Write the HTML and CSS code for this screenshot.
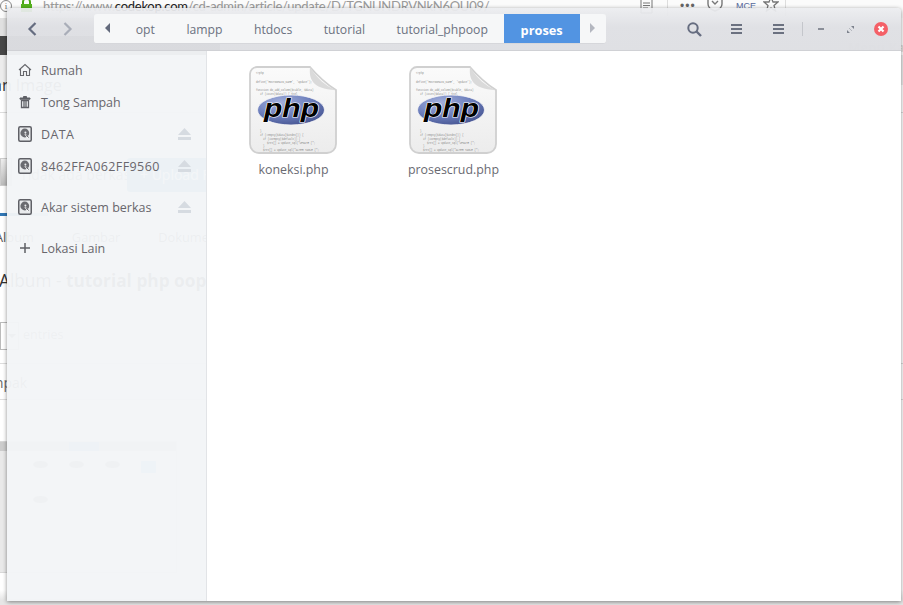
FILE: index.html
```html
<!DOCTYPE html>
<html lang="id">
<head>
<meta charset="utf-8">
<title>proses</title>
<link rel="stylesheet" href="styles.css">
</head>
<body>
<svg class="defs" width="0" height="0" aria-hidden="true">
  <defs>
    <linearGradient id="paper" x1="0" y1="0" x2="0" y2="1">
      <stop offset="0" stop-color="#fbfbfb"/><stop offset="1" stop-color="#ececec"/>
    </linearGradient>
    <radialGradient id="oval" cx="0.35" cy="0.25" r="0.85">
      <stop offset="0" stop-color="#a3b0dc"/><stop offset="0.55" stop-color="#6a7cba"/><stop offset="1" stop-color="#414f8c"/>
    </radialGradient>
    <symbol id="php" viewBox="0 0 88 88">
      <path d="M8 1H61C67 8 76 17 87 24V78A9 9 0 0 1 78 87H10A9 9 0 0 1 1 78V8A7 7 0 0 1 8 1Z" fill="url(#paper)" stroke="#d0d0d0" stroke-width="1.8"/>
      <path d="M61 1C60 12 62 23 87 24C76 20 68 12 61 1Z" fill="#dadada"/>
      <g class="code">
        <text x="7" y="8">&lt;?php</text>
        <text x="7" y="17">define('HOSTDOMAIN_NAME', 'update');</text>
        <text x="7" y="25">function do_add_column($table, $data)</text>
        <text x="11" y="29">if (isset($data)) { $sql</text>
        <text x="11" y="66">}</text>
        <text x="11" y="70">if (!empty($data[$index])) {</text>
        <text x="14" y="74">if (isempty($default)) {</text>
        <text x="18" y="78">$ret[] = update_sql("UPDATE {";</text>
        <text x="14" y="81">}</text>
        <text x="14" y="85">$ret[] = update_sql("ALTER TABLE {";</text>
      </g>
      <ellipse cx="42" cy="44" rx="33.5" ry="15" fill="url(#oval)" stroke="#f4f4f6" stroke-width="0.8"/>
      <text class="logo" x="15" y="51" textLength="55" lengthAdjust="spacingAndGlyphs">php</text>
    </symbol>
    <symbol id="disk" viewBox="0 0 14 16">
      <rect x="0.75" y="0.75" width="12.5" height="14.5" rx="1.5" fill="#e9ebed" stroke="#5f6066" stroke-width="1.5"/>
      <circle cx="6.8" cy="7" r="4.4" fill="#6a6b70"/>
      <circle cx="7.4" cy="6.6" r="1" fill="#e9ebed"/>
      <path d="M7 8L10.5 12" stroke="#fff" stroke-width="1.4"/>
      <path d="M7.8 8.4L10.6 11.6" stroke="#55565b" stroke-width="1"/>
    </symbol>
    <symbol id="eject" viewBox="0 0 13 12">
      <path d="M6.5 0L13 7H0Z M0 9H13V12H0Z" fill="#d6dbe1"/>
    </symbol>
    <symbol id="menu" viewBox="0 0 11 10">
      <path d="M0 0H11V2H0Z M0 4H11V6H0Z M0 8H11V10H0Z" fill="#6b7180"/>
    </symbol>
  </defs>
</svg>

<div class="browser">
  <header class="toolbar">
    <span class="info">i</span>
    <svg class="lock" width="13" height="14" viewBox="0 0 13 14"><path d="M3 7V4a3.500 3.500 0 0 1 7 0v3" fill="none" stroke="#4aa516" stroke-width="2"/><rect x="1" y="6" width="11" height="8" fill="#57b51e"/></svg>
    <span class="url">https://www.<b>codekop.com</b>/cd-admin/article/update/D/TGNUNDRVNkN6OU09/</span>
    <span class="tools">
      <svg class="reader" width="13" height="16" viewBox="0 0 13 16"><path d="M1 1H12V15H1Z M3 5H10M3 7.500H10M3 10H8" fill="none" stroke="#777"/></svg>
      <span class="tool-sep"></span>
      <span class="dots">•••</span>
      <svg class="shield" width="16" height="18" viewBox="0 0 16 18"><path d="M1 1H15V10C15 14 11 16 8 17C5 16 1 14 1 10Z M5 7L8 10L11 7" fill="none" stroke="#777" stroke-width="1.400"/></svg>
      <span class="tiny">TINY<br>MCE</span>
      <svg class="star" width="16" height="16" viewBox="0 0 16 16"><path d="M8 1L10 6H15L11 9.500L12.500 15L8 12L3.500 15L5 9.500L1 6H6Z" fill="none" stroke="#777" stroke-width="1.300"/></svg>
    </span>
  </header>
  <div class="band-dark"><span class="brand"></span><span class="menu-kat">Menu Kategori</span></div>
  <div class="band-title"><span class="page-title">an Image</span></div>
  <div class="band-upload">
    <span class="file-btn"></span>
    <span class="no-file">Tidak ada berkas d</span>
    <span class="upload-btn">+ Upload File</span>
  </div>
  <div class="progress"></div>
  <nav class="tabs"><span>Album</span><span>Gambar</span><span>Dokumen</span></nav>
  <h2 class="album">Album - <b>tutorial php oop</b></h2>
  <div class="entries"><span class="select"><i></i></span><span class="entries-text">entries</span></div>
  <div class="pak">Tampak</div>
  <div class="shot">
    <div class="shot-bar"><span class="shot-tab"></span></div>
    <div class="shot-grid"><i></i><i></i><i></i><i class="shot-folder"></i><i></i></div>
  </div>
</div>

<main class="window">
  <header class="headerbar">
    <div class="nav">
      <svg width="10" height="14" viewBox="0 0 10 14"><path d="M8.500 1L2.500 7L8.500 13" fill="none" stroke="#666d80" stroke-width="2.200"/></svg>
      <svg width="10" height="14" viewBox="0 0 10 14"><path d="M1.500 1L7.500 7L1.500 13" fill="none" stroke="#a9adb8" stroke-width="2.200"/></svg>
    </div>
    <div class="path">
      <span class="arrow"><svg width="5" height="10" viewBox="0 0 5 10"><path d="M5 0V10L0 5Z" fill="#636a7c"/></svg></span>
      <span class="crumb">opt</span>
      <span class="crumb">lampp</span>
      <span class="crumb">htdocs</span>
      <span class="crumb">tutorial</span>
      <span class="crumb">tutorial_phpoop</span>
      <span class="crumb current">proses</span>
      <span class="arrow"><svg width="5" height="10" viewBox="0 0 5 10"><path d="M0 0V10L5 5Z" fill="#b4b7c0"/></svg></span>
    </div>
    <div class="actions">
      <span class="cell"><svg width="15" height="15" viewBox="0 0 15 15"><circle cx="6" cy="6" r="4.700" fill="none" stroke="#666d80" stroke-width="2"/><path d="M9.500 9.500L14 14" stroke="#666d80" stroke-width="2.400"/></svg></span>
      <span class="cell"><svg width="11" height="10"><use href="#menu"/></svg></span>
      <span class="cell"><svg width="11" height="10"><use href="#menu"/></svg></span>
    </div>
    <span class="hsep"></span>
    <div class="wm">
      <span class="wm-cell"><span class="wm-min"></span></span>
      <span class="wm-cell"><svg width="7" height="7" viewBox="0 0 7 7"><path d="M4 0H7V3Z M0 4V7H3Z" fill="#7d828d"/><path d="M2 2L5 5" stroke="#b5b8bf"/></svg></span>
      <span class="wm-cell"><svg width="14" height="14" viewBox="0 0 14 14"><circle cx="7" cy="7" r="7" fill="#f46067"/><path d="M4.500 4.500L9.500 9.500M9.500 4.500L4.500 9.500" stroke="#fff" stroke-width="2.200"/></svg></span>
    </div>
  </header>
  <div class="body">
    <aside class="sidebar">
      <div class="row">
        <svg class="ico" width="14" height="14" viewBox="0 0 14 14"><path d="M1 7L7 1.500L13 7M2.500 5.500V12.500H5.500V8.500H8.500V12.500H11.500V5.500" fill="none" stroke="#66676c" stroke-width="1.100"/></svg>
        <span class="label">Rumah</span>
      </div>
      <div class="row">
        <svg class="ico" width="14" height="14" viewBox="0 0 14 14"><path d="M2 3H12V4.200H2Z M5.500 3V1.500H8.500V3" fill="#5f6066" stroke="#5f6066"/><path d="M3.500 5.500H10.500V12.500H3.500Z M6 6V12M8 6V12" fill="none" stroke="#5f6066" stroke-width="1.300"/></svg>
        <span class="label">Tong Sampah</span>
      </div>
      <div class="row">
        <svg class="ico" width="14" height="16"><use href="#disk"/></svg>
        <span class="label wide">DATA</span>
        <svg class="eject" width="13" height="12"><use href="#eject"/></svg>
      </div>
      <div class="row">
        <svg class="ico" width="14" height="16"><use href="#disk"/></svg>
        <span class="label wide">8462FFA062FF9560</span>
        <svg class="eject" width="13" height="12"><use href="#eject"/></svg>
      </div>
      <div class="row spaced">
        <svg class="ico" width="14" height="16"><use href="#disk"/></svg>
        <span class="label">Akar sistem berkas</span>
        <svg class="eject" width="13" height="12"><use href="#eject"/></svg>
      </div>
      <div class="row spaced">
        <svg class="ico" width="14" height="14" viewBox="0 0 14 14"><path d="M7 2V12M2 7H12" stroke="#5f6066" stroke-width="1.500"/></svg>
        <span class="label">Lokasi Lain</span>
      </div>
    </aside>
    <section class="files">
      <figure class="file">
        <svg width="88" height="88"><use href="#php"/></svg>
        <figcaption>koneksi.php</figcaption>
      </figure>
      <figure class="file">
        <svg width="88" height="88"><use href="#php"/></svg>
        <figcaption>prosescrud.php</figcaption>
      </figure>
    </section>
  </div>
</main>
</body>
</html>
```

FILE: styles.css
```css
* { box-sizing: border-box; }
html, body { margin: 0; height: 100%; }
body {
  position: relative;
  width: 903px;
  height: 605px;
  overflow: hidden;
  background: #fff;
  font-family: "Open Sans", "Noto Sans", sans-serif;
}
.defs { position: absolute; }

/* Browser behind the file manager */
.browser {
  height: 605px;
  display: flex;
  flex-direction: column;
  overflow: hidden;
  color: #333;
  background: linear-gradient(#fff 0 590px, #e6e6e6 600px);
}
.toolbar {
  height: 18px;
  flex: none;
  display: flex;
  align-items: flex-end;
  background: #fbfbfb;
  position: relative;
}
.info {
  width: 12px; height: 12px;
  margin: 0 0 6px 0;
  border: 1px solid #888;
  border-radius: 50%;
  font: 9px/10px "Liberation Serif", serif;
  text-align: center;
  color: #666;
}
.lock { margin: 0 0 6px 8px; }
.url {
  margin: 0 0 5px 10px;
  font: 13px/14px Lato, sans-serif;
  letter-spacing: -.26px;
  color: #9a9a9a;
  white-space: nowrap;
}
.url b { font-weight: 400; color: #222; }
.tools {
  position: absolute;
  left: 640px;
  top: -4px;
  width: 146px;
  height: 20px;
  display: flex;
  align-items: center;
  border-right: 1px solid #ddd;
}
.reader { flex: none; }
.tool-sep { width: 1px; height: 20px; background: #ddd; margin: 0 12px 0 14px; }
.dots { width: 27px; font: 12px "Liberation Sans", sans-serif; color: #666; letter-spacing: 1px; }
.shield { flex: none; margin-top: -6px; }
.tiny { width: 14px; margin: -8px 0 0 13px; font: 9px/9px "Liberation Sans", sans-serif; color: #56699c; text-align: center; }
.star { flex: none; margin: -4px 0 0 13px; }

.band-dark {
  height: 37px;
  flex: none;
  position: relative;
}
.brand {
  display: block;
  width: 220px;
  height: 37px;
  background: linear-gradient(#e0e0e0 0 18px, #474747 18px);
}
.menu-kat {
  position: absolute;
  left: 848px;
  top: 20px;
  font-size: 13px;
  color: #e0e0e0;
  font-weight: 700;
  white-space: nowrap;
}
.band-title {
  height: 58px;
  flex: none;
  border-bottom: 1px solid #ddd;
  background: linear-gradient(#ececec 0 30px, #fff 30px);
}
.page-title { display: block; font-size: 16px; line-height: 60px; margin-left: -7px; white-space: nowrap; color: #333; }
.band-upload {
  height: 100px;
  flex: none;
  display: flex;
  align-items: flex-start;
  padding-top: 45px;
}
.file-btn {
  width: 12px; height: 28px;
  flex: none;
  background: linear-gradient(#eee, #bbb);
  border: 1px solid #ccc;
}
.no-file { font-size: 14px; line-height: 34px; margin-left: 8px; color: #777; width: 107px; flex: none; white-space: nowrap; overflow: hidden; }
.upload-btn {
  height: 34px;
  padding: 0 13px;
  line-height: 34px;
  border-radius: 3px;
  font-size: 14px;
  background: #4fa0c8;
  color: #fff;
  white-space: nowrap;
}
.progress {
  height: 3px;
  flex: none;
  width: 48px;
  background: linear-gradient(90deg, #3277b5 0 20px, #8fc0df 20px);
}
.tabs {
  height: 42px;
  flex: none;
  display: flex;
  gap: 38px;
  font-size: 12.800px;
  line-height: 42px;
  color: #555;
  margin-left: -5px;
}
.album {
  margin: 0 0 0 -1px;
  height: 46px;
  flex: none;
  font-size: 17.300px;
  line-height: 46px;
  font-weight: 400;
  white-space: nowrap;
  color: #333;
}
.entries {
  height: 28px;
  flex: none;
  margin-top: 18px;
  display: flex;
  align-items: center;
  gap: 4px;
  font-size: 12.500px;
  color: #777;
}
.entries-text { margin-top: -3px; }
.select { width: 19px; height: 28px; border: 1px solid #bbb; position: relative; display: block; }
.select i {
  position: absolute; right: 2px; top: 11px;
  border: 4px solid transparent; border-top-color: #777; border-bottom: 0;
}
.pak {
  height: 37px;
  flex: none;
  margin: 13px 0 0 -25px;
  line-height: 37px;
  font-size: 14px;
  color: #666;
  border-top: 1px solid #ddd;
  border-bottom: 1px solid #ddd;
}
.shot {
  width: 177px;
  height: 132px;
  margin-top: 41px;
  flex: none;
  background: #e9e9e9;
  border: 1px solid #d8d8d8;
  border-left: 0;
  filter: blur(0.7px);
}
.shot-bar { height: 9px; background: #ccc; padding-left: 69px; }
.shot-tab { display: block; width: 30px; height: 9px; background: #7fb0e8; }
.shot-grid { display: grid; grid-template-columns: repeat(4, 36px); padding: 10px 0 0 33px; gap: 23px 0; }
.shot-grid i { display: block; width: 15px; height: 7px; border-radius: 50%; background: #999; }
.shot-grid .shot-folder { height: 12px; border-radius: 1px; background: #7fc4ee; }

/* File manager window */
.window {
  position: absolute;
  left: 7px;
  top: 8px;
  width: 894px;
  height: 593px;
  display: flex;
  flex-direction: column;
  border-radius: 4px 4px 0 0;
  box-shadow: 0 1px 4px rgba(0, 0, 0, .45);
}
.headerbar {
  height: 43px;
  flex: none;
  display: flex;
  align-items: center;
  padding-left: 20px;
  border-radius: 4px 4px 0 0;
  border-bottom: 1px solid #d0d1d5;
  background: linear-gradient(rgba(236, 237, 240, .93), rgba(223, 224, 228, .97) 45%, rgba(222, 223, 227, .97));
}
.nav { display: flex; gap: 26px; width: 67px; }
.path {
  display: flex;
  height: 30px;
  margin-top: -1px;
  border-radius: 3px;
  background: #f6f7f8;
  border-bottom: 1px solid #d6d7db;
  overflow: hidden;
  font-size: 12.200px;
  color: #6b7180;
}
.arrow { width: 26px; display: flex; align-items: center; justify-content: center; flex: none; }
.crumb { padding: 0 15.750px; line-height: 31px; white-space: nowrap; }
.current { background: #5294e2; color: #fff; font-weight: 700; font-size: 12.800px; height: 30px; line-height: 32px; width: 76px; padding: 0; text-align: center; flex: none; }
.actions { display: flex; align-items: center; margin-left: 68px; }
.cell { width: 42px; display: flex; justify-content: center; align-items: center; }
.hsep { width: 1px; height: 14px; background: #c4c6cb; margin-left: 2px; }
.wm { display: flex; align-items: center; margin-left: 3px; }
.wm-cell { width: 30px; display: flex; justify-content: center; align-items: center; }
.wm-min { width: 6px; height: 2px; background: #8a8e98; }
.body { flex: 1; display: flex; min-height: 0; }
.sidebar {
  width: 200px;
  flex: none;
  padding-top: 3px;
  background: rgba(243, 245, 247, .96);
  border-right: 1px solid #e2e4e7;
}
.row {
  height: 32px;
  display: flex;
  align-items: center;
  padding: 0 15px 0 11px;
  font-size: 12.500px;
  color: #68666c;
}
.row.spaced { margin-top: 9px; }
.ico { flex: none; width: 14px; }
.label { margin-left: 9px; white-space: nowrap; }
.wide { letter-spacing: .4px; }
.eject { margin-left: auto; }
.files {
  flex: 1;
  background: #fff;
  display: flex;
  align-items: flex-start;
  padding: 15px 0 0 6px;
}
.file { width: 160px; margin: 0; display: flex; flex-direction: column; align-items: center; }
.file figcaption { margin-top: 7px; padding-left: 1px; font-size: 12.400px; color: #6a6a72; line-height: 17px; }
.code text { font: 2.600px "Liberation Mono", monospace; fill: #8a8a8a; }
.logo {
  font: italic 700 25px "Liberation Sans", sans-serif;
  fill: #000;
  stroke: #fff;
  stroke-width: 1.100px;
  paint-order: stroke;
}
```
